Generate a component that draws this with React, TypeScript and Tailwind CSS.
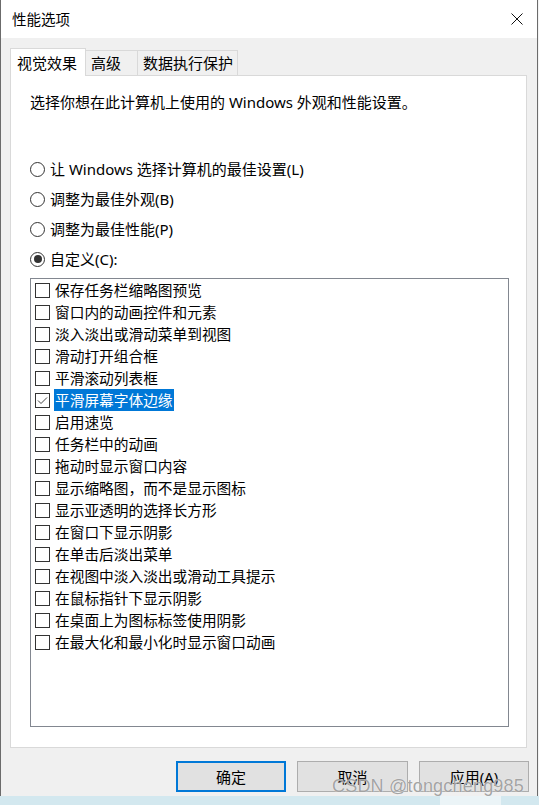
import React from 'react';

const FONT = '"Noto Sans", "Noto Sans CJK SC", sans-serif';

const effects = [
    '保存任务栏缩略图预览',
    '窗口内的动画控件和元素',
    '淡入淡出或滑动菜单到视图',
    '滑动打开组合框',
    '平滑滚动列表框',
    '平滑屏幕字体边缘',
    '启用速览',
    '任务栏中的动画',
    '拖动时显示窗口内容',
    '显示缩略图，而不是显示图标',
    '显示亚透明的选择长方形',
    '在窗口下显示阴影',
    '在单击后淡出菜单',
    '在视图中淡入淡出或滑动工具提示',
    '在鼠标指针下显示阴影',
    '在桌面上为图标标签使用阴影',
    '在最大化和最小化时显示窗口动画',
];

const radios = [
    { label: '让 Windows 选择计算机的最佳设置(L)', checked: false },
    { label: '调整为最佳外观(B)', checked: false },
    { label: '调整为最佳性能(P)', checked: false },
    { label: '自定义(C):', checked: true },
];

const Radio: React.FC<{ checked: boolean }> = ({ checked }) => (
    <span className="w-[15px] h-[15px] rounded-full border border-[#333] bg-white flex items-center justify-center shrink-0">
        {checked && <span className="w-[8px] h-[8px] rounded-full bg-[#333]" />}
    </span>
);

const CheckBox: React.FC<{ checked: boolean }> = ({ checked }) => (
    <span className="w-[15px] h-[15px] border border-[#333] bg-white flex items-center justify-center shrink-0">
        {checked && (
            <svg width="13" height="13" viewBox="0 0 13 13">
                <polyline points="2,6.5 5,9.5 11,3.5" fill="none" stroke="#444" strokeWidth="1" />
            </svg>
        )}
    </span>
);

export default function App() {
    return (
        <div className="w-[539px] h-[805px] flex flex-col bg-[#f3f3f3] text-black" style={{ fontFamily: FONT }}>
            <div className="w-[538px] flex-1 flex flex-col border-l border-r border-[#6b6b6b]">
                {/* title bar */}
                <div className="h-[38px] bg-white flex items-center justify-between pl-[11px] pr-[14px]">
                    <span className="text-[14.5px] leading-[20px]">性能选项</span>
                    <svg width="12" height="12" viewBox="0 0 12 12">
                        <path d="M0.5 0.5 L11.5 11.5 M11.5 0.5 L0.5 11.5" stroke="#111" strokeWidth="1" />
                    </svg>
                </div>

                <div className="flex-1 bg-[#f0f0f0] pt-[10px] pl-[9px] flex flex-col">
                    {/* tabs */}
                    <div className="flex items-end h-[27px] text-[15px]">
                        <div className="relative z-10 w-[76px] h-[28px] -mb-px bg-white border border-b-0 border-[#d9d9d9] flex items-center pl-[6px] leading-[20px]">
                            视觉效果
                        </div>
                        <div className="w-[52px] h-[25px] border-t border-r border-[#d9d9d9] flex items-center pl-[5px] leading-[20px]">
                            高级
                        </div>
                        <div className="w-[100px] h-[25px] border-t border-r border-[#d9d9d9] flex items-center pl-[5px] leading-[20px]">
                            数据执行保护
                        </div>
                    </div>

                    {/* panel */}
                    <div className="w-[517px] h-[673px] bg-white border border-[#d9d9d9] pt-[16px] pl-[19px] flex flex-col">
                        <p className="text-[15px] leading-[20px]">选择你想在此计算机上使用的 Windows 外观和性能设置。</p>

                        <div className="mt-[42px] flex flex-col">
                            {radios.map(r => (
                                <div key={r.label} className="h-[30px] flex items-center gap-[5px] text-[15px] leading-[20px]">
                                    <Radio checked={r.checked} />
                                    <span>{r.label}</span>
                                </div>
                            ))}
                        </div>

                        <div className="mt-[4px] w-[479px] h-[449px] border border-[#828790] bg-white flex flex-col pl-[4px]">
                            {effects.map((e, i) => {
                                const selected = i === 5;
                                return (
                                    <div key={e} className="h-[22px] flex items-center text-[14.7px] leading-[20px]">
                                        <CheckBox checked={selected} />
                                        <span
                                            className={
                                                selected
                                                    ? 'ml-[4px] px-[1px] h-[22px] flex items-center bg-[#0078d7] text-white'
                                                    : 'ml-[5px]'
                                            }
                                        >
                                            {e}
                                        </span>
                                    </div>
                                );
                            })}
                        </div>
                    </div>

                    {/* buttons */}
                    <div className="mt-[13px] flex gap-[11px] pl-[166px] text-[15px]">
                        <button className="w-[110px] h-[31px] bg-[#e1e1e1] border-2 border-[#0078d7] leading-[20px]">确定</button>
                        <button className="w-[111px] h-[31px] bg-[#e1e1e1] border border-[#adadad] leading-[20px]">取消</button>
                        <button className="w-[110px] h-[31px] bg-[#e1e1e1] border border-[#adadad] leading-[20px]">应用(A)</button>
                    </div>
                </div>
            </div>

            {/* strip below the window */}
            <div className="relative h-[9px] flex">
                <div className="w-[440px] bg-[#d3e8ef]" />
                <div className="w-[61px] bg-[#ebf4f7]" />
                <div className="flex-1 bg-[#d3e8ef]" />
                <span
                    className="absolute right-[15px] -top-[22px] text-[18px] leading-[24px] text-[#8c8c8c]/80 whitespace-nowrap tracking-[0.2px]"
                    style={{ fontFamily: '"Liberation Sans", Arial, sans-serif', textShadow: '0 0 1px #fff' }}
                >
                    CSDN @tongcheng985
                </span>
            </div>
        </div>
    );
}
